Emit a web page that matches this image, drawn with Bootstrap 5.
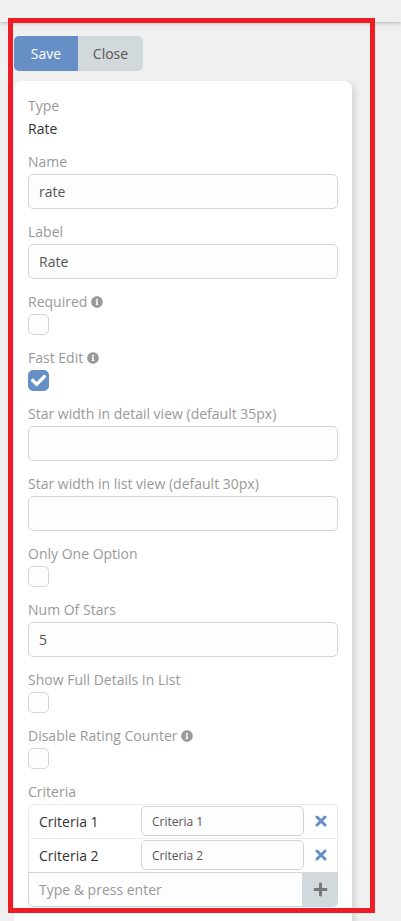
<!DOCTYPE html>
<html lang="en">
<head>
<meta charset="utf-8">
<meta name="viewport" content="width=device-width, initial-scale=1">
<title>Edit field</title>
<link href="https://cdn.jsdelivr.net/npm/bootstrap@5.3.0/dist/css/bootstrap.min.css" rel="stylesheet">
<style>
body{font-family:"Open Sans",sans-serif;font-size:14px;line-height:20px;color:#333;background:#f0f0f0;height:921px;overflow:hidden}
.topbar{height:22px;background:#f0f0f0;box-shadow:0 1px 4px rgba(0,0,0,.26)}
.page-area{padding:14px 49px 0 14px}
.btn-group .btn{font-size:14px;line-height:20px;border:0;height:35px;padding:8px 0 7px;border-radius:5px}
.btn.btn-save{background:#6690c5;color:#fff;width:64px}
.btn.btn-close-form{background:#d1d9dc;color:#555;width:65px}
.panel-card{margin-top:10px;height:860px;border:0;border-radius:8px;padding:15px 14px;box-shadow:3px 3px 6px rgba(0,0,0,.12)}
.cell{margin-bottom:13px}
.cell-label{color:#999;margin-bottom:2px;height:20px;display:flex;align-items:center;white-space:pre}
.cell-label svg{width:12px;height:12px}
.type-value{padding-top:1px}
.form-control{font-size:14px;line-height:20px;height:35px;padding:6px 10px;color:#555;background:#fdfdfd;border:1px solid #d1d5d6;border-radius:5px}
.form-control::placeholder{color:#999;opacity:1}
.form-control.form-control-sm{font-size:12px;line-height:18px;height:30px;min-height:30px;width:163px;padding:5px 10px;border-radius:5px}
.check-box{width:21px;height:21px;border:1px solid #d1d5d6;border-radius:5px;background:#fdfdfd}
.check-box.is-on{background:#6690c5;border-color:#6690c5;color:#fff}
.option-list{border-radius:5px 5px 0 0}
.option-list .list-group-item{height:34px;padding:0 10px 1px;color:#333;border:1px solid #e8eced;border-bottom:0}
.option-name{width:102px;padding-top:1px}
.remove-icon{color:#6690c5;margin-left:11px}
.add-row .form-control{border-radius:0 0 0 5px;border-right:0}
.add-row .btn{width:36px;background:#d1d9dc;color:#777;border:0;border-radius:0 0 5px 0;padding:0}
.red-frame{position:absolute;left:8px;top:18px;width:367px;height:895px;border:5px solid #ee1c25;pointer-events:none;z-index:10}
</style>
</head>
<body>
<svg class="d-none" aria-hidden="true">
<symbol id="info" viewBox="0 0 512 512"><path fill="currentColor" d="M256 8C119.043 8 8 119.083 8 256c0 136.997 111.043 248 248 248s248-111.003 248-248C504 119.083 392.957 8 256 8zm0 110c23.196 0 42 18.804 42 42s-18.804 42-42 42-42-18.804-42-42 18.804-42 42-42zm56 254c0 6.627-5.373 12-12 12h-88c-6.627 0-12-5.373-12-12v-24c0-6.627 5.373-12 12-12h12v-64h-12c-6.627 0-12-5.373-12-12v-24c0-6.627 5.373-12 12-12h64c6.627 0 12 5.373 12 12v100h12c6.627 0 12 5.373 12 12v24z"/></symbol>
<symbol id="cross" viewBox="0 0 12 12"><path fill="none" stroke="currentColor" stroke-width="3" stroke-linecap="round" d="M2 2l8 8M10 2l-8 8"/></symbol>
</svg>
<header class="topbar"></header>
<main class="page-area">
<div class="btn-group d-flex">
<button type="button" class="btn btn-save flex-grow-0">Save</button>
<button type="button" class="btn btn-close-form flex-grow-0 ms-0">Close</button>
</div>
<section class="card panel-card">
<div class="cell"><div class="cell-label">Type</div><div class="type-value">Rate</div></div>
<div class="cell"><label class="cell-label" for="f1">Name</label><input id="f1" class="form-control" value="rate"></div>
<div class="cell"><label class="cell-label" for="f2">Label</label><input id="f2" class="form-control" value="Rate"></div>
<div class="cell"><div class="cell-label">Required <svg><use href="#info"/></svg></div><div class="check-box"></div></div>
<div class="cell"><div class="cell-label">Fast Edit <svg><use href="#info"/></svg></div><div class="check-box is-on d-flex align-items-center justify-content-center"><svg width="15" height="15" viewBox="0 0 512 512"><path fill="currentColor" stroke="currentColor" stroke-width="20" d="M173.898 439.404l-166.4-166.4c-9.997-9.997-9.997-26.206 0-36.204l36.203-36.204c9.997-9.998 26.207-9.998 36.204 0L192 312.69 432.095 72.596c9.997-9.997 26.207-9.997 36.204 0l36.203 36.204c9.997 9.997 9.997 26.206 0 36.204l-294.4 294.401c-9.998 9.997-26.207 9.997-36.204-.001z"/></svg></div></div>
<div class="cell"><label class="cell-label" for="f3">Star width in detail view (default 35px)</label><input id="f3" class="form-control"></div>
<div class="cell"><label class="cell-label" for="f4">Star width in list view (default 30px)</label><input id="f4" class="form-control"></div>
<div class="cell"><div class="cell-label">Only One Option</div><div class="check-box"></div></div>
<div class="cell"><label class="cell-label" for="f5">Num Of Stars</label><input id="f5" class="form-control" value="5"></div>
<div class="cell"><div class="cell-label">Show Full Details In List</div><div class="check-box"></div></div>
<div class="cell"><div class="cell-label">Disable Rating Counter <svg><use href="#info"/></svg></div><div class="check-box"></div></div>
<div class="cell"><div class="cell-label">Criteria</div>
<div class="list-group option-list">
<div class="list-group-item d-flex align-items-center"><span class="option-name">Criteria 1</span><input class="form-control form-control-sm" value="Criteria 1" aria-label="Criteria 1"><svg class="remove-icon flex-shrink-0" width="12" height="12"><use href="#cross"/></svg></div>
<div class="list-group-item d-flex align-items-center"><span class="option-name">Criteria 2</span><input class="form-control form-control-sm" value="Criteria 2" aria-label="Criteria 2"><svg class="remove-icon flex-shrink-0" width="12" height="12"><use href="#cross"/></svg></div>
</div>
<div class="input-group add-row"><input class="form-control" placeholder="Type &amp; press enter" aria-label="New option"><button type="button" class="btn ms-0 d-flex align-items-center justify-content-center" aria-label="Add"><svg width="15" height="15" viewBox="0 0 15 15"><path fill="none" stroke="currentColor" stroke-width="3" stroke-linecap="round" d="M7.5 2v11M2 7.5h11"/></svg></button></div>
</div>
</section>
</main>
<div class="red-frame"></div>
<script src="https://cdn.jsdelivr.net/npm/bootstrap@5.3.0/dist/js/bootstrap.bundle.min.js"></script>
</body>
</html>
